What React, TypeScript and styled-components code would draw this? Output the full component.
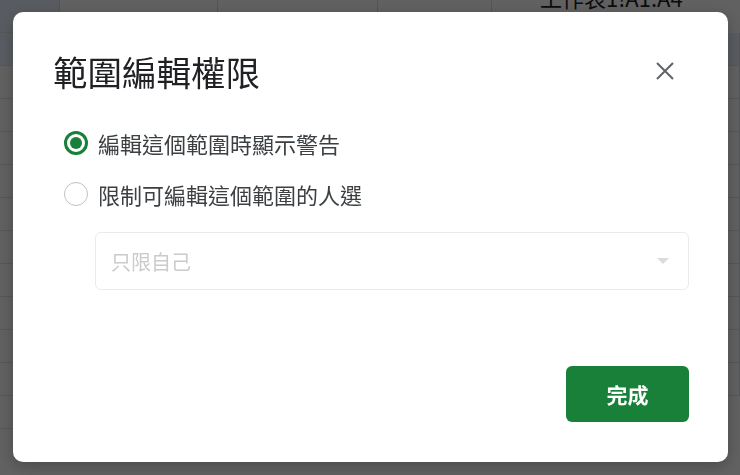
import React, { useState } from 'react'
import styled, { createGlobalStyle } from 'styled-components'

const GlobalStyle = createGlobalStyle`
  html, body {
    margin: 0;
    padding: 0;
    width: 740px;
    height: 475px;
    overflow: hidden;
    font-family: "Noto Sans CJK TC", "Noto Sans", "Liberation Sans", sans-serif;
  }
`

const Sheet = styled.div`
  display: grid;
  grid-template-columns: 60px 158px 160px 114px 1fr;
  grid-auto-rows: 33px;
  width: 740px;
  height: 475px;
  background: #fff;
  overflow: hidden;
`

const Cell = styled.div<{ $selected?: boolean; $edge?: boolean }>`
  border-right: 1px solid #dadce0;
  border-bottom: 1px solid ${({ $edge }) => ($edge ? '#1a73e8' : '#e2e3e3')};
  background: ${({ $selected }) => ($selected ? '#e8f0fe' : '#fff')};
  display: flex;
  align-items: center;
  justify-content: flex-end;
  padding: 0 4px;
  font-size: 15px;
  color: #202124;
`

const SidePanelTitle = styled.div`
  grid-column: 5;
  grid-row: 1;
  display: flex;
  align-items: flex-start;
  padding-left: 48px;
  margin-top: -19px;
  font-size: 22px;
  color: #202124;
`

const Overlay = styled.div`
  position: fixed;
  inset: 0;
  background: rgba(0, 0, 0, 0.62);
  display: flex;
  align-items: flex-start;
  justify-content: flex-start;
  padding: 12px 0 0 13px;
`

const Dialog = styled.div`
  width: 715px;
  height: 450px;
  box-sizing: border-box;
  background: #fff;
  border-radius: 10px;
  box-shadow: 0 4px 16px rgba(0, 0, 0, 0.25);
  padding: 35px 39px 40px 40px;
  display: flex;
  flex-direction: column;
`

const Header = styled.div`
  display: flex;
  align-items: center;
  justify-content: space-between;
  height: 48px;
`

const Title = styled.h1`
  margin: 0;
  font-size: 34.5px;
  font-weight: 400;
  color: #202124;
  line-height: 48px;
`

const CloseButton = styled.button`
  border: none;
  background: none;
  padding: 0;
  width: 36px;
  height: 36px;
  margin-right: 6px;
  display: flex;
  align-items: center;
  justify-content: center;
  cursor: pointer;
`

const Options = styled.div`
  display: flex;
  flex-direction: column;
  gap: 11px;
  margin-top: 28px;
`

const RadioRow = styled.label`
  display: flex;
  align-items: center;
  gap: 10px;
  height: 40px;
  padding-left: 11px;
  font-size: 22px;
  color: #3c4043;
  cursor: pointer;
`

const RadioCircle = styled.span<{ $checked: boolean }>`
  width: 24px;
  height: 24px;
  box-sizing: border-box;
  border-radius: 50%;
  border: ${({ $checked }) => ($checked ? '3px solid #188038' : '1.5px solid #bfc2c4')};
  display: flex;
  align-items: center;
  justify-content: center;
  flex-shrink: 0;

  &::after {
    content: '';
    width: 12px;
    height: 12px;
    border-radius: 50%;
    background: ${({ $checked }) => ($checked ? '#188038' : 'transparent')};
  }
`

const Select = styled.div`
  margin: 18px 0 0 42px;
  height: 58px;
  box-sizing: border-box;
  border: 1px solid #ebebeb;
  border-radius: 6px;
  display: flex;
  align-items: center;
  justify-content: space-between;
  padding: 0 19px 0 15px;
  font-size: 20px;
  color: #cbcbcb;
`

const Caret = styled.span`
  width: 0;
  height: 0;
  border-left: 6px solid transparent;
  border-right: 6px solid transparent;
  border-top: 6px solid #dcdcdc;
`

const Footer = styled.div`
  margin-top: auto;
  display: flex;
  justify-content: flex-end;
`

const DoneButton = styled.button`
  width: 123px;
  height: 56px;
  border: none;
  border-radius: 6px;
  background: #188038;
  color: #fff;
  font-family: inherit;
  font-size: 21px;
  font-weight: 700;
  cursor: pointer;
`

const options = ['編輯這個範圍時顯示警告', '限制可編輯這個範圍的人選']

const App = () => {
  const [choice, setChoice] = useState(0)

  const cells = []
  for (let r = 0; r < 15; r++) {
    for (let c = 0; c < 4; c++) {
      cells.push(
        <Cell key={`${r}-${c}`} $selected={r < 4 && c === 0} $edge={r === 3 && c === 0}>
          {r === 0 && c < 2 ? '0' : ''}
        </Cell>
      )
    }
  }

  return (
    <>
      <GlobalStyle />
      <Sheet>
        {cells.slice(0, 4)}
        <SidePanelTitle>工作表1!A1:A4</SidePanelTitle>
        {cells.slice(4)}
      </Sheet>
      <Overlay>
        <Dialog>
          <Header>
            <Title>範圍編輯權限</Title>
            <CloseButton aria-label="關閉">
              <svg width="18" height="18" viewBox="0 0 18 18">
                <path d="M1 1L17 17M17 1L1 17" stroke="#5f6368" strokeWidth="2" />
              </svg>
            </CloseButton>
          </Header>
          <Options>
            {options.map((text, i) => (
              <RadioRow key={text} onClick={() => setChoice(i)}>
                <RadioCircle $checked={choice === i} />
                {text}
              </RadioRow>
            ))}
          </Options>
          <Select>
            只限自己
            <Caret />
          </Select>
          <Footer>
            <DoneButton>完成</DoneButton>
          </Footer>
        </Dialog>
      </Overlay>
    </>
  )
}

export default App
